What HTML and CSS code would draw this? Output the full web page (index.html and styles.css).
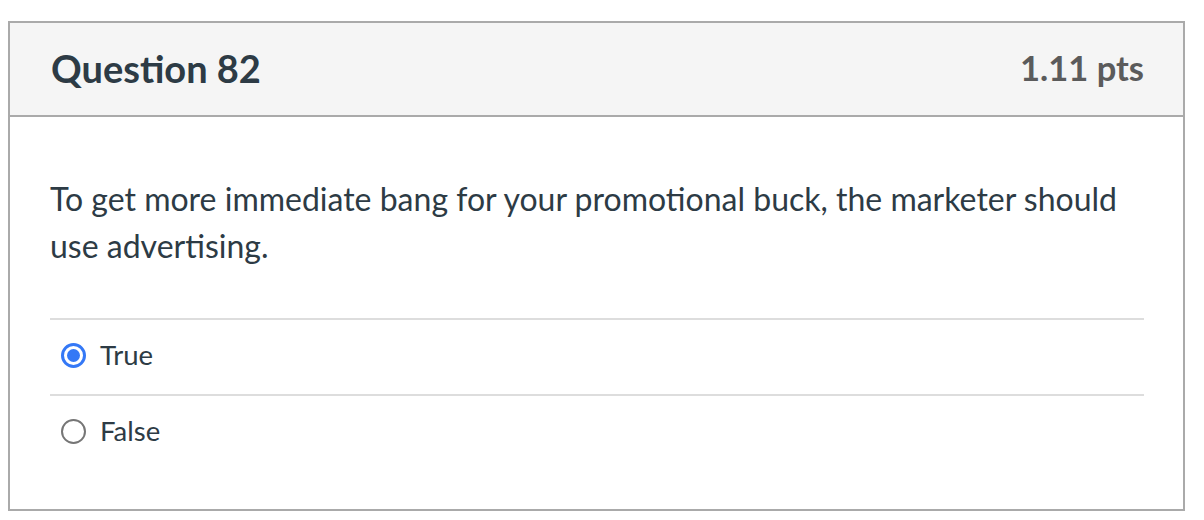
FILE: index.html
```html
<!DOCTYPE html>
<html lang="en">
<head>
<meta charset="utf-8">
<title>Question 82</title>
<link rel="stylesheet" href="styles.css">
</head>
<body>
<div class="page">
  <section class="question">
    <header class="question-header">
      <h2 class="question-title">Question 82</h2>
      <span class="question-points">1.11 pts</span>
    </header>
    <div class="question-body">
      <p class="question-text">To get more immediate bang for your promotional buck, the marketer should use advertising.</p>
      <div class="answers">
        <label class="answer">
          <span class="radio radio-checked"><span class="radio-dot"></span></span>
          <span class="answer-label">True</span>
        </label>
        <label class="answer">
          <span class="radio"></span>
          <span class="answer-label">False</span>
        </label>
      </div>
    </div>
  </section>
</div>
</body>
</html>
```

FILE: styles.css
```css
html, body {
  margin: 0;
  padding: 0;
  background: #ffffff;
}

body {
  font-family: Lato, "Noto Sans", sans-serif;
  color: #2d3b45;
}

.page {
  padding: 21px 19px 0 8px;
}

.question {
  box-sizing: border-box;
  width: 1177px;
  height: 490px;
  border: 2px solid #aaaaaa;
  background: #ffffff;
}

.question-header {
  box-sizing: border-box;
  height: 94px;
  background: #f5f5f5;
  border-bottom: 2px solid #aaaaaa;
  display: flex;
  align-items: center;
  justify-content: space-between;
  padding: 0 39px 2px 41px;
}

.question-title {
  margin: 0;
  font-size: 38px;
  font-weight: 700;
  color: #2d3b45;
  line-height: 1;
}

.question-points {
  font-size: 34.5px;
  font-weight: 700;
  color: #5b5b5b;
  line-height: 1;
}

.question-body {
  padding: 58px 39px 0 40px;
}

.question-text {
  margin: 0 0 49px 0;
  font-size: 32px;
  line-height: 47px;
  color: #2d3b45;
}

.answers {
  display: flex;
  flex-direction: column;
}

.answer {
  box-sizing: border-box;
  height: 76px;
  border-top: 2px solid #dddddd;
  display: flex;
  align-items: center;
  gap: 14px;
  padding-left: 11px;
  padding-bottom: 4px;
}

.radio {
  box-sizing: border-box;
  width: 25px;
  height: 25px;
  border-radius: 50%;
  border: 2px solid #767676;
  background: #ffffff;
  display: flex;
  align-items: center;
  justify-content: center;
  flex: none;
}

.radio-checked {
  border: 3px solid #3478f6;
}

.radio-dot {
  width: 13px;
  height: 13px;
  border-radius: 50%;
  background: #3478f6;
}

.answer-label {
  font-size: 27.5px;
  color: #2d3b45;
  line-height: 1;
}
```
